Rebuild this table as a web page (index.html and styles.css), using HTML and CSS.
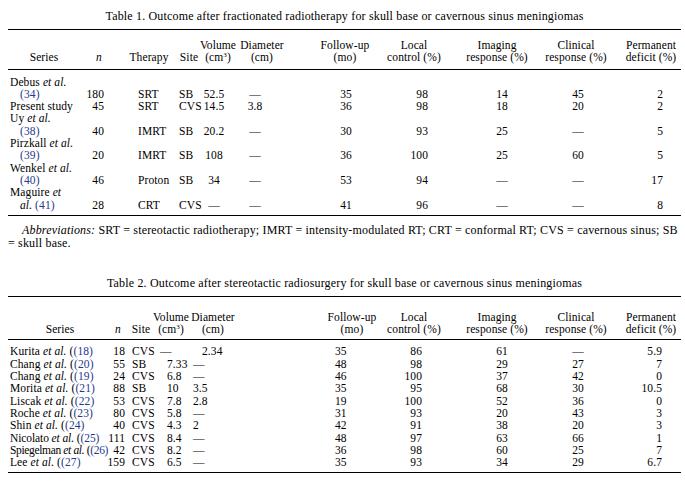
FILE: index.html
```html
<!DOCTYPE html>
<html>
<head>
<meta charset="utf-8">
<link rel="stylesheet" href="styles.css">
</head>
<body>
<div class="page">
  <div class="caption">Table 1. Outcome after fractionated radiotherapy for skull base or cavernous sinus meningiomas</div>
  <table class="t t1">
    <colgroup>
      <col class="a1"><col class="a2"><col class="a3"><col class="a4"><col class="a5"><col class="a6"><col class="a7"><col class="a8"><col class="a9"><col class="a10"><col class="a11">
    </colgroup>
    <thead>
      <tr>
        <th><span class="h">Series</span></th>
        <th><span class="h"><i>n</i></span></th>
        <th><span class="h">Therapy</span></th>
        <th><span class="h">Site</span></th>
        <th><span class="h">Volume<br>(cm<sup>3</sup>)</span></th>
        <th><span class="h">Diameter<br>(cm)</span></th>
        <th><span class="h">Follow-up<br>(mo)</span></th>
        <th><span class="h">Local<br>control (%)</span></th>
        <th><span class="h">Imaging<br>response (%)</span></th>
        <th><span class="h">Clinical<br>response (%)</span></th>
        <th><span class="h">Permanent<br>deficit (%)</span></th>
      </tr>
    </thead>
    <tbody>
      <tr><td colspan="11">Debus <i>et al.</i></td></tr>
      <tr><td class="ind"><span class="ref">(34)</span></td><td>180</td><td>SRT</td><td>SB</td><td>52.5</td><td>—</td><td>35</td><td>98</td><td>14</td><td>45</td><td>2</td></tr>
      <tr><td>Present study</td><td>45</td><td>SRT</td><td>CVS</td><td>14.5</td><td>3.8</td><td>36</td><td>98</td><td>18</td><td>20</td><td>2</td></tr>
      <tr><td colspan="11">Uy <i>et al.</i></td></tr>
      <tr><td class="ind"><span class="ref">(38)</span></td><td>40</td><td>IMRT</td><td>SB</td><td>20.2</td><td>—</td><td>30</td><td>93</td><td>25</td><td>—</td><td>5</td></tr>
      <tr><td colspan="11">Pirzkall <i>et al.</i></td></tr>
      <tr><td class="ind"><span class="ref">(39)</span></td><td>20</td><td>IMRT</td><td>SB</td><td>108</td><td>—</td><td>36</td><td>100</td><td>25</td><td>60</td><td>5</td></tr>
      <tr><td colspan="11">Wenkel <i>et al.</i></td></tr>
      <tr><td class="ind"><span class="ref">(40)</span></td><td>46</td><td>Proton</td><td>SB</td><td>34</td><td>—</td><td>53</td><td>94</td><td>—</td><td>—</td><td>17</td></tr>
      <tr><td colspan="11">Maguire <i>et</i></td></tr>
      <tr class="last"><td class="ind"><i>al.</i> <span class="ref">(41)</span></td><td>28</td><td>CRT</td><td>CVS</td><td>—</td><td>—</td><td>41</td><td>96</td><td>—</td><td>—</td><td>8</td></tr>
    </tbody>
  </table>
  <p class="abbr"><i>Abbreviations:</i> SRT = stereotactic radiotherapy; IMRT = intensity-modulated RT; CRT = conformal RT; CVS = cavernous sinus; SB<br>= skull base.</p>

  <div class="caption cap2">Table 2. Outcome after stereotactic radiosurgery for skull base or cavernous sinus meningiomas</div>
  <table class="t t2">
    <colgroup>
      <col class="b1"><col class="b2"><col class="b3"><col class="b4"><col class="b5"><col class="b6"><col class="b7"><col class="b8"><col class="b9"><col class="b10">
    </colgroup>
    <thead>
      <tr>
        <th><span class="h">Series</span></th>
        <th><span class="h"><i>n</i></span></th>
        <th><span class="h">Site</span></th>
        <th><span class="h">Volume<br>(cm<sup>3</sup>)</span></th>
        <th><span class="h">Diameter<br>(cm)</span></th>
        <th><span class="h">Follow-up<br>(mo)</span></th>
        <th><span class="h">Local<br>control (%)</span></th>
        <th><span class="h">Imaging<br>response (%)</span></th>
        <th><span class="h">Clinical<br>response (%)</span></th>
        <th><span class="h">Permanent<br>deficit (%)</span></th>
      </tr>
    </thead>
    <tbody>
      <tr><td>Kurita <i>et al.</i> (<span class="ref">(18)</span></td><td>18</td><td>CVS</td><td class="dash">—</td><td class="off">2.34</td><td>35</td><td>86</td><td>61</td><td>—</td><td>5.9</td></tr>
      <tr><td>Chang <i>et al.</i> (<span class="ref">(20)</span></td><td>55</td><td>SB</td><td>7.33</td><td>—</td><td>48</td><td>98</td><td>29</td><td>27</td><td>7</td></tr>
      <tr><td>Chang <i>et al.</i> (<span class="ref">(19)</span></td><td>24</td><td>CVS</td><td>6.8</td><td>—</td><td>46</td><td>100</td><td>37</td><td>42</td><td>0</td></tr>
      <tr><td>Morita <i>et al.</i> (<span class="ref">(21)</span></td><td>88</td><td>SB</td><td>10</td><td>3.5</td><td>35</td><td>95</td><td>68</td><td>30</td><td>10.5</td></tr>
      <tr><td>Liscak <i>et al.</i> (<span class="ref">(22)</span></td><td>53</td><td>CVS</td><td>7.8</td><td>2.8</td><td>19</td><td>100</td><td>52</td><td>36</td><td>0</td></tr>
      <tr><td>Roche <i>et al.</i> (<span class="ref">(23)</span></td><td>80</td><td>CVS</td><td>5.8</td><td>—</td><td>31</td><td>93</td><td>20</td><td>43</td><td>3</td></tr>
      <tr><td>Shin <i>et al.</i> (<span class="ref">(24)</span></td><td>40</td><td>CVS</td><td>4.3</td><td>2</td><td>42</td><td>91</td><td>38</td><td>20</td><td>3</td></tr>
      <tr><td class="snug">Nicolato <i>et al.</i> (<span class="ref">(25)</span></td><td>111</td><td>CVS</td><td>8.4</td><td>—</td><td>48</td><td>97</td><td>63</td><td>66</td><td>1</td></tr>
      <tr><td class="tight">Spiegelman <i>et al.</i> (<span class="ref">(26)</span></td><td>42</td><td>CVS</td><td>8.2</td><td>—</td><td>36</td><td>98</td><td>60</td><td>25</td><td>7</td></tr>
      <tr class="last"><td>Lee <i>et al.</i> (<span class="ref">(27)</span></td><td>159</td><td>CVS</td><td>6.5</td><td>—</td><td>35</td><td>93</td><td>34</td><td>29</td><td>6.7</td></tr>
    </tbody>
  </table>
</div>
</body>
</html>
```
FILE: styles.css
```css
html, body {
  margin: 0;
  padding: 0;
  background: #fff;
}
body {
  font-family: "Liberation Serif", "Times New Roman", serif;
  font-size: 12px;
  letter-spacing: 0.17px;
  color: #000;
}
.page {
  padding: 10px 4px 0 8px;
  width: 673px;
}
.caption {
  text-align: center;
  line-height: 12px;
  height: 14px;
  margin-bottom: 5px;
}
.cap2 {
  margin-top: 27px;
}
.t {
  width: 673px;
  table-layout: fixed;
  border-collapse: collapse;
  border-top: 1px solid #000;
  border-bottom: 1px solid #000;
  font-size: 11.5px;
  letter-spacing: 0.1px;
}
.t th, .t td {
  padding: 0;
  font-weight: normal;
  line-height: 12.3px;
  white-space: nowrap;
  text-align: left;
}
.t th {
  text-align: center;
  vertical-align: bottom;
  border-bottom: 1px solid #000;
}
.h {
  display: block;
  margin: 0 -30px;
}
.t1 thead th { padding-top: 9px; padding-bottom: 5px; }
.t1 tbody tr:first-child td { padding-top: 6px; }
.t2 thead th { padding-top: 14px; padding-bottom: 4px; }
.t2 tbody tr:first-child td { padding-top: 5px; }
.t tbody tr.last td { padding-bottom: 4px; }
sup {
  font-size: 7px;
  line-height: 0;
  vertical-align: 4px;
}
.ref { color: #26388c; }
.ind { padding-left: 12px !important; }
.snug { letter-spacing: -0.1px; }
.tight { letter-spacing: -0.35px; }

/* ---------- Table 1 columns ---------- */
.a1 { width: 64px; }
.a2 { width: 52px; }
.a3 { width: 46px; }
.a4 { width: 30px; }
.a5 { width: 40px; }
.a6 { width: 64px; }
.a7 { width: 76px; }
.a8 { width: 76px; }
.a9 { width: 80px; }
.a10 { width: 78px; }
.a11 { width: 67px; }

.t1 th:nth-child(1) { padding-left: 8px; }
.t1 th:nth-child(2) { padding-left: 2px; }
.t1 th:nth-child(3) { padding-left: 4px; }
.t1 th:nth-child(4) { padding-left: 8px; }
.t1 th:nth-child(5) { padding-right: 4px; }
.t1 th:nth-child(6) { padding-right: 20px; }
.t1 th:nth-child(7) { padding-left: 6px; }
.t1 th:nth-child(8) { padding-right: 8px; }
.t1 th:nth-child(9) { padding-left: 2px; }
.t1 th:nth-child(10) { padding-left: 2px; }
.t1 th:nth-child(11) { padding-left: 7px; }

.t1 td:nth-child(1) { padding-left: 2px; }
.t1 td:nth-child(2) { text-align: right; padding-right: 20px; }
.t1 td:nth-child(3) { padding-left: 14px; }
.t1 td:nth-child(4) { padding-left: 9px; }
.t1 td:nth-child(5) { text-align: center; padding-right: 12px; }
.t1 td:nth-child(6) { text-align: center; padding-right: 34px; }
.t1 td:nth-child(7) { text-align: center; padding-left: 8px; }
.t1 td:nth-child(8) { text-align: right; padding-right: 28px; }
.t1 td:nth-child(9) { text-align: center; padding-left: 12px; }
.t1 td:nth-child(10) { text-align: center; padding-left: 6px; }
.t1 td:nth-child(11) { text-align: right; padding-right: 18px; }

/* ---------- Table 2 columns ---------- */
.b1 { width: 96px; }
.b2 { width: 24px; }
.b3 { width: 24px; }
.b4 { width: 40px; }
.b5 { width: 108px; }
.b6 { width: 90px; }
.b7 { width: 66px; }
.b8 { width: 80px; }
.b9 { width: 78px; }
.b10 { width: 67px; }

.t2 th:nth-child(1) { padding-left: 8px; }
.t2 th:nth-child(2) { padding-left: 4px; }
.t2 th:nth-child(3) { padding-left: 2px; }
.t2 th:nth-child(4) { padding-right: 2px; }
.t2 th:nth-child(5) { padding-right: 66px; }
.t2 th:nth-child(6) { padding-left: 14px; }
.t2 th:nth-child(7) { padding-right: 18px; }
.t2 th:nth-child(8) { padding-left: 2px; }
.t2 th:nth-child(9) { padding-left: 2px; }
.t2 th:nth-child(10) { padding-left: 7px; }

.t2 td:nth-child(1) { padding-left: 2px; }
.t2 td:nth-child(2) { text-align: right; padding-right: 3px; }
.t2 td:nth-child(3) { padding-left: 4px; }
.t2 td:nth-child(4) { padding-left: 15px; }
.t2 td:nth-child(4).dash { padding-left: 8px; }
.t2 td:nth-child(5) { padding-left: 1px; }
.t2 td:nth-child(5).off { padding-left: 10px; }
.t2 td:nth-child(6) { padding-left: 35px; }
.t2 td:nth-child(7) { text-align: right; padding-right: 34px; }
.t2 td:nth-child(8) { text-align: center; padding-left: 12px; }
.t2 td:nth-child(9) { text-align: center; padding-left: 6px; }
.t2 td:nth-child(10) { text-align: right; padding-right: 19px; }

.abbr {
  margin: 8px 0 0 0;
  text-indent: 14px;
  line-height: 13px;
  white-space: nowrap;
}
```
